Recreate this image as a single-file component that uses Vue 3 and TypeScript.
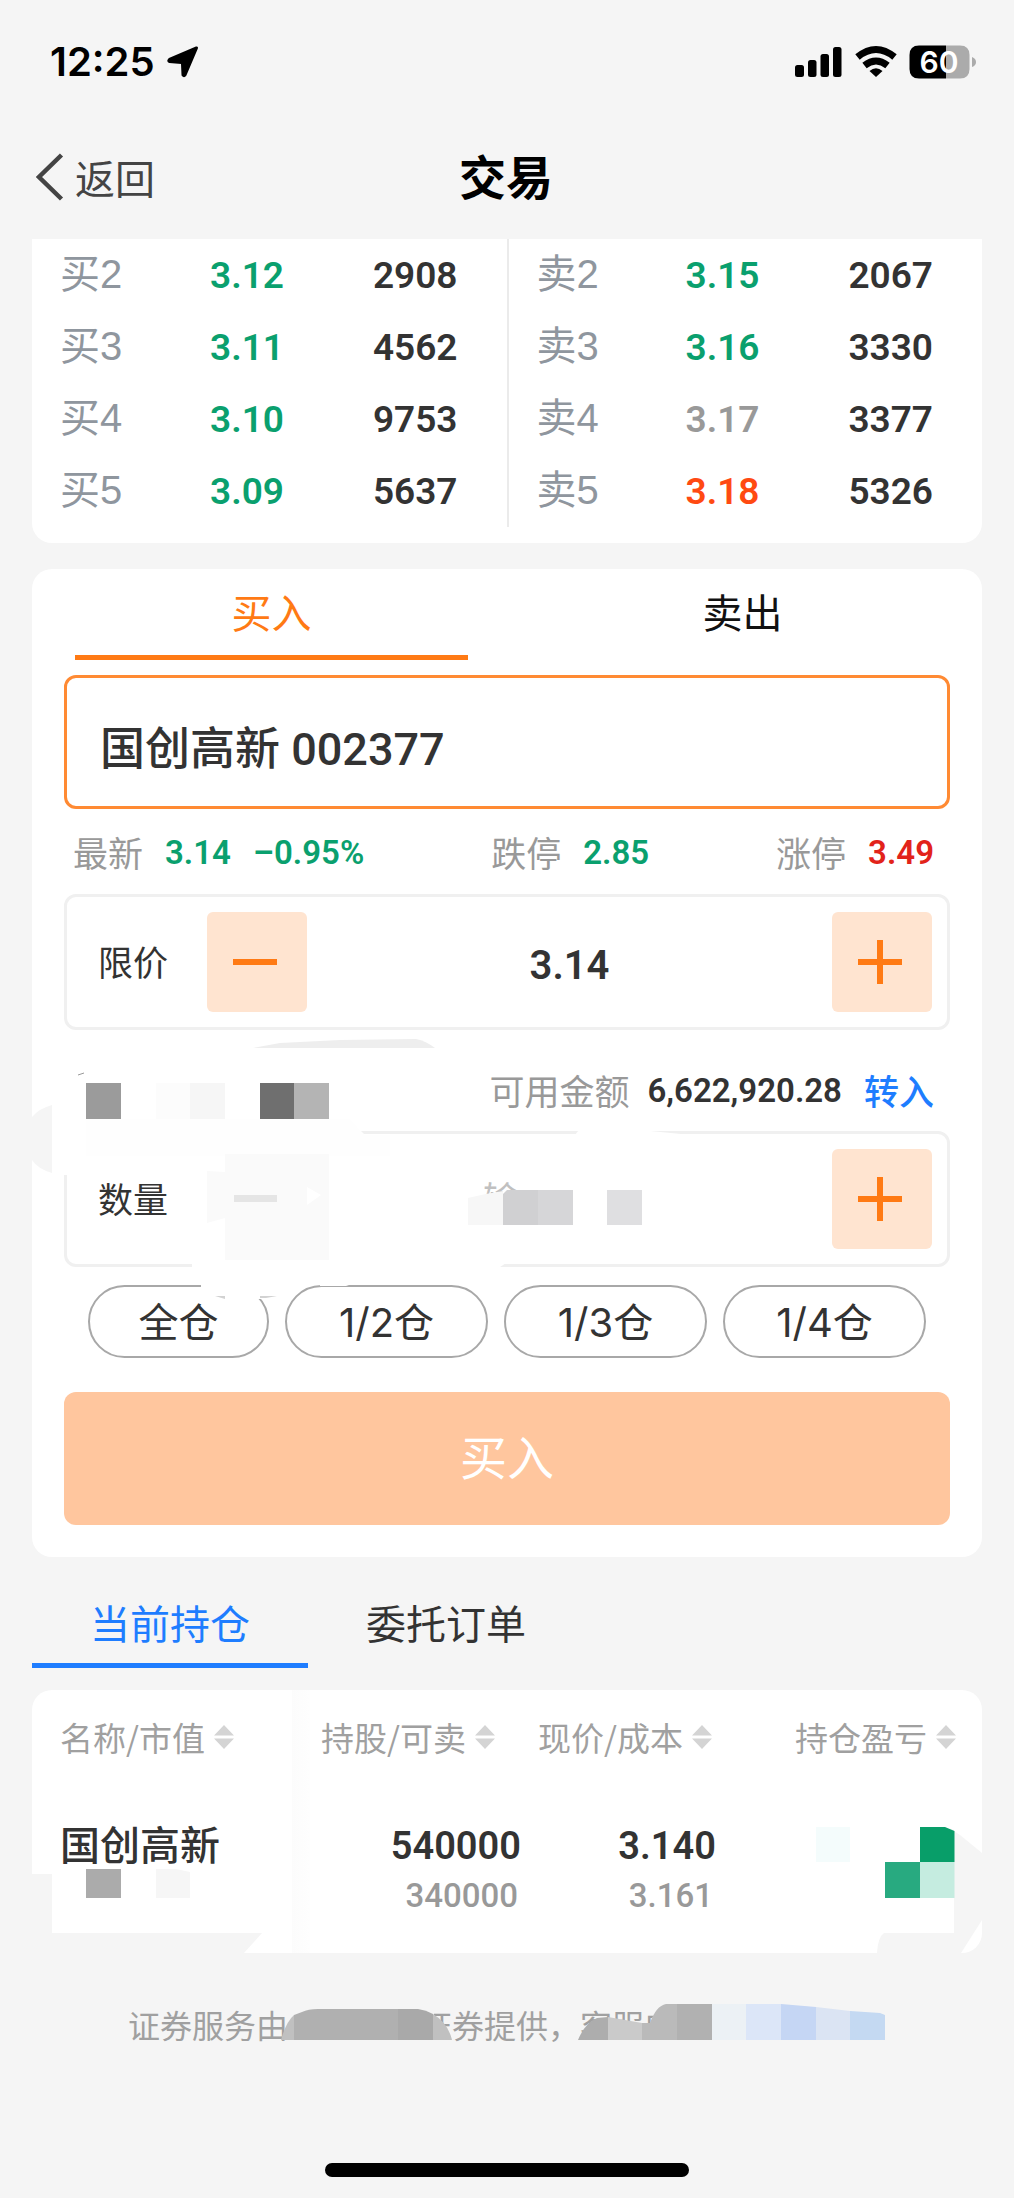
<script setup lang="ts">
import { ref } from 'vue'

type Tone = 'down' | 'up' | 'flat'
interface Quote {
  label: string
  price: string
  volume: string
  tone: Tone
}

const book: { side: string; quotes: Quote[] }[] = [
  {
    side: '买盘',
    quotes: [
      { label: '买2', price: '3.12', volume: '2908', tone: 'down' },
      { label: '买3', price: '3.11', volume: '4562', tone: 'down' },
      { label: '买4', price: '3.10', volume: '9753', tone: 'down' },
      { label: '买5', price: '3.09', volume: '5637', tone: 'down' },
    ],
  },
  {
    side: '卖盘',
    quotes: [
      { label: '卖2', price: '3.15', volume: '2067', tone: 'down' },
      { label: '卖3', price: '3.16', volume: '3330', tone: 'down' },
      { label: '卖4', price: '3.17', volume: '3377', tone: 'flat' },
      { label: '卖5', price: '3.18', volume: '5326', tone: 'up' },
    ],
  },
]

const side = ref<'buy' | 'sell'>('buy')
const listTab = ref<'positions' | 'orders'>('positions')
const stock = ref('国创高新 002377')
const price = ref('3.14')
const quantity = ref('')
const portions = ['全仓', '1/2仓', '1/3仓', '1/4仓']
const columns = ['名称/市值', '持股/可卖', '现价/成本', '持仓盈亏']

function stepPrice(delta: number) {
  price.value = (Number(price.value) + delta).toFixed(2)
}
</script>

<template>
  <div class="page">
    <header>
      <div class="status">
        <div class="clock">
          <span>12:25</span>
          <svg width="32" height="32" viewBox="0 0 32 32" aria-hidden="true">
            <path d="M29.500 2 L2.500 13.500 Q1 15 2.500 15.500 L14.500 16.500 Q15.500 17 15.500 18 L16 29 Q17 30.500 18 29Z" fill="#000" stroke="#000" stroke-width="3" stroke-linejoin="round" />
          </svg>
        </div>
        <svg width="184" height="34" viewBox="794 45 184 34" aria-hidden="true">
          <rect x="795" y="65" width="9" height="12" rx="2.500" />
          <rect x="808" y="60" width="8.500" height="17" rx="2.500" />
          <rect x="820.500" y="54" width="8.500" height="23" rx="2.500" />
          <rect x="833" y="47" width="8.500" height="30" rx="2.500" />
          <g fill="none" stroke="#000">
            <path d="M857.500 57 Q876 42 894.500 57" stroke-width="7" />
            <path d="M864.500 65.500 Q876 56.500 887.500 65.500" stroke-width="7" />
          </g>
          <path d="M869.500 71 Q876 65.500 882.500 71 L876 77 Z" />
          <path d="M919 45.500 H946 V78.500 H919 Q909.500 78.500 909.500 69 V55 Q909.500 45.500 919 45.500Z" />
          <path d="M946 45.500 H960 Q969.500 45.500 969.500 55 V69 Q969.500 78.500 960 78.500 H946Z" fill="#ababab" />
          <path d="M972 57 Q976 58.500 976 62 Q976 65.500 972 67Z" fill="#ababab" />
          <text class="battery-text" x="939" y="73" text-anchor="middle">60</text>
        </svg>
      </div>
      <nav class="nav">
        <button type="button" class="back">
          <svg width="28" height="48" viewBox="0 0 28 48" aria-hidden="true">
            <path d="M25.500 2 L3 24 L25.500 46" fill="none" stroke="#444" stroke-width="4.500" />
          </svg>
          返回
        </button>
        <h1>交易</h1>
      </nav>
    </header>

    <main>
      <section class="card book">
        <table v-for="half in book" :key="half.side" :aria-label="half.side">
          <tbody>
            <tr v-for="q in half.quotes" :key="q.label">
              <th scope="row">{{ q.label }}</th>
              <td :class="q.tone">{{ q.price }}</td>
              <td class="volume">{{ q.volume }}</td>
            </tr>
          </tbody>
        </table>
      </section>

      <section class="card trade">
        <div class="side-tabs">
          <button type="button" :class="{ active: side === 'buy' }" @click="side = 'buy'">买入</button>
          <button type="button" :class="{ active: side === 'sell' }" @click="side = 'sell'">卖出</button>
        </div>

        <input v-model="stock" class="search" type="text" aria-label="股票名称或代码" />

        <div class="limits">
          <div><span>最新</span><b class="down">3.14</b><b class="down">–0.95%</b></div>
          <div><span>跌停</span><b class="down">2.85</b></div>
          <div><span>涨停</span><b class="ceiling">3.49</b></div>
        </div>

        <div class="stepper">
          <label for="price">限价</label>
          <button type="button" class="step" aria-label="减少价格" @click="stepPrice(-0.01)">
            <svg width="44" height="44" viewBox="0 0 44 44"><path d="M0 22H44" /></svg>
          </button>
          <input id="price" v-model="price" type="text" />
          <button type="button" class="step" aria-label="增加价格" @click="stepPrice(0.01)">
            <svg width="44" height="44" viewBox="0 0 44 44"><path d="M0 22H44M22 0V44" /></svg>
          </button>
        </div>

        <div class="amount">
          <div class="funds">
            <span>可用金额</span>
            <b>6,622,920.28</b>
            <a href="#transfer">转入</a>
          </div>
          <div class="stepper">
            <label for="quantity">数量</label>
            <button type="button" class="step" aria-label="减少数量">
              <svg width="44" height="44" viewBox="0 0 44 44"><path d="M0 22H44" /></svg>
            </button>
            <input id="quantity" v-model="quantity" class="quantity" type="text" />
            <button type="button" class="step" aria-label="增加数量">
              <svg width="44" height="44" viewBox="0 0 44 44"><path d="M0 22H44M22 0V44" /></svg>
            </button>
          </div>
          <div class="portions">
            <button v-for="p in portions" :key="p" type="button">{{ p }}</button>
          </div>

          <!-- privacy mosaic over the account figures -->
          <svg class="mosaic" width="660" height="280" viewBox="32 1030 660 280" aria-hidden="true">
            <path d="M253 1048 L280 1043 L340 1040 L416 1039 Q426 1041 435 1048Z" fill="#eee" />
            <path d="M60 1120 H350 L364 1134 H470 V1180 H520 V1228 H560 L500 1267 Q490 1270 480 1270 H192 V1232 H172 V1175 H60Z" fill="#fff" />
            <path d="M579 1130 H640 L681 1134 V1136 H574Z" fill="#fff" />
            <path d="M201 1282 H262 V1299 H225 Q209 1296 201 1287Z" fill="#fff" />
            <path d="M320 1282 H358 L346 1286 H320Z" fill="#fff" />
            <path d="M215 1296 H225 V1299Z M260 1296 H277 L266 1298 H260Z" fill="#d2d2d2" />
            <path d="M78 1075 L84 1073" stroke="#999" />
            <path d="M32 1117 Q40 1108 52 1105 V1173 Q38 1169 32 1160Z" fill="#f5f5f5" />
            <path d="M86 1119 H350 L364 1135 H390 V1156 H86Z" fill="#fefefe" />
            <path d="M86 1083 h35 v36 h-35Z" fill="#9b9b9b" />
            <path d="M156 1083 h34 v36 h-34Z" fill="#fcfcfc" />
            <path d="M190 1083 h35 v36 h-35Z" fill="#f6f6f6" />
            <path d="M260 1083 h34 v36 h-34Z" fill="#6f6f6f" />
            <path d="M294 1083 h35 v36 h-35Z" fill="#b4b4b4" />
            <path d="M207 1171 L225 1172 V1218 L207 1223Z M225 1154 H329 V1260 H225Z" fill="#fafafa" />
            <path d="M234 1195 h43 v7 h-43Z" fill="#e5e5e5" />
            <path d="M307 1187 L321 1195 L307 1205Z" fill="#fff" />
            <text class="hint" x="483" y="1213">输</text>
            <path d="M482 1194 H503 V1190 H521 V1228 H482Z" fill="#fff" />
            <path d="M468 1198 L486 1194 L503 1191 V1225 H468Z" fill="#f7f7f7" />
            <path d="M503 1194 L507 1190 H538 V1225 H503Z" fill="#d0d0d2" />
            <path d="M538 1190 h35 v35 h-35Z" fill="#d6d6d8" />
            <path d="M607 1190 h35 v35 h-35Z" fill="#dfdfe1" />
          </svg>
        </div>

        <button type="button" class="submit">买入</button>
      </section>

      <div class="list-tabs">
        <button type="button" :class="{ active: listTab === 'positions' }" @click="listTab = 'positions'">当前持仓</button>
        <button type="button" :class="{ active: listTab === 'orders' }" @click="listTab = 'orders'">委托订单</button>
      </div>

      <section class="card holdings">
        <table>
          <thead>
            <tr>
              <th v-for="c in columns" :key="c" scope="col">
                <button type="button">
                  {{ c }}
                  <svg width="20" height="24" viewBox="0 0 20 24" aria-hidden="true">
                    <path d="M10 0 L20 10.500 H0Z M0 13.500 H20 L10 24Z" fill="#d4d4d4" />
                  </svg>
                </button>
              </th>
            </tr>
          </thead>
          <tbody>
            <tr>
              <td><strong>国创高新</strong></td>
              <td><b>540000</b><span>340000</span></td>
              <td><b>3.140</b><span>3.161</span></td>
              <td></td>
            </tr>
          </tbody>
        </table>

        <!-- privacy mosaic: market value on the left, profit and loss on the right -->
        <svg class="mosaic left" width="240" height="80" viewBox="32 1873 240 80" aria-hidden="true">
          <path d="M32 1874 H52 V1933 H262 L244 1953 H32Z" fill="#f5f5f5" />
          <path d="M86 1869 h35 v29 h-35Z" fill="#ababab" />
          <path d="M156 1869 h20 l14 3 v26 h-34Z" fill="#f6f6f6" />
        </svg>
        <svg class="mosaic right" width="182" height="133" viewBox="800 1820 182 133" aria-hidden="true">
          <path d="M949 1828 L960 1835 L982 1853 V1920 L961 1953 H877 Q878 1937 884 1933 H954 V1830Z" fill="#f5f5f5" />
          <path d="M816 1827 h34 v35 h-34Z" fill="#f4fcfc" />
          <path d="M920 1827 h25 l9.500 4 v31 h-34.500Z" fill="#089e69" />
          <path d="M885 1862 h35 v36 h-35Z" fill="#28aa80" />
          <path d="M920 1862 h34.500 v36 h-34.500Z" fill="#c5ece0" />
        </svg>
      </section>
    </main>

    <footer>
      <p>
        <span>证券服务由</span><span>证券提供，客服电</span>
        <svg class="mosaic" width="758" height="48" viewBox="128 2001 758 48" aria-hidden="true">
          <path d="M419 2004 H434 V2045 H419Z M580 2041 L592 2022 H610 L650 2024 L658 2004 H690 V2045 H580Z" fill="#f5f5f5" />
          <path d="M281 2040 Q286 2022 294 2015 V2040Z" fill="#c0c0c0" />
          <path d="M294 2015 L302 2012 Q308 2009 318 2009 H398 V2040 H294Z" fill="#b0b0b0" />
          <path d="M398 2009 H418 Q426 2010 433 2014 V2040 H398Z" fill="#a9a9a9" />
          <path d="M433 2014 Q448 2023 452 2040 H433Z" fill="#c0c0c0" />
          <path d="M578 2040 Q585 2023 597 2018 L608 2017 V2040Z" fill="#adadad" />
          <path d="M608 2017 L642 2023 V2040 H608Z" fill="#cacaca" />
          <path d="M642 2023 H650 Q656 2006 666 2004 H677 V2040 H642Z" fill="#bababa" />
          <path d="M677 2004 h35 v36 h-35Z" fill="#b1b1b1" />
          <path d="M712 2004 h34 v36 h-34Z" fill="#ecf1f5" />
          <path d="M746 2004 h35 v36 h-35Z" fill="#dce6f8" />
          <path d="M781 2004 L816 2007 V2040 H781Z" fill="#c5d6f4" />
          <path d="M816 2007 L850 2011 V2040 H816Z" fill="#dbe4f3" />
          <path d="M850 2011 L880 2013 L885 2015 V2040 H850Z" fill="#c4d9f2" />
        </svg>
      </p>
      <div class="home-bar"></div>
    </footer>
  </div>
</template>

<style>
body {
  background: #f5f5f5;
}
</style>

<style scoped>
.page {
  min-height: 100vh;
  box-sizing: border-box;
  background: #f5f5f5;
  color: #333;
  font-family: 'Liberation Sans', 'Noto Sans CJK SC', sans-serif;
  font-size: 40px;
}
.page * {
  box-sizing: border-box;
}
button,
input {
  margin: 0;
  padding: 0;
  border: 0;
  background: none;
  color: inherit;
  font: inherit;
}
input {
  outline: none;
  min-width: 0;
}
table {
  border-collapse: collapse;
  table-layout: fixed;
}
th,
td {
  padding: 0;
  font-weight: 400;
  text-align: left;
}
.mosaic {
  position: absolute;
  pointer-events: none;
}

/* status bar and title */
.status {
  display: flex;
  justify-content: space-between;
  align-items: center;
  height: 124px;
  padding: 0 36px 0 50px;
}
.clock {
  display: flex;
  align-items: center;
  gap: 12px;
  color: #000;
  font: 600 40px/48px Inter, sans-serif;
}
.battery-text {
  fill: #fff;
  font: 600 30px Inter, sans-serif;
}
.nav {
  display: grid;
  grid-template-columns: 1fr auto 1fr;
  align-items: center;
  height: 110px;
  padding: 0 38px 0 36px;
}
.nav h1 {
  margin: 0;
  color: #000;
  font-size: 47px;
  line-height: 64px;
  font-weight: 700;
}
.back {
  display: flex;
  align-items: center;
  gap: 11px;
  padding-bottom: 4px;
  color: #444;
}

main {
  padding: 5px 32px 0;
}
.card {
  position: relative;
  border-radius: 20px;
  background: #fff;
}

/* order book */
.book {
  display: flex;
  padding-bottom: 16px;
  border-radius: 0 0 20px 20px;
}
.book table {
  flex: 1;
}
.book table + table {
  border-left: 2px solid #ebebeb;
}
.book tr {
  height: 72px;
}
.book th {
  width: 178px;
  padding: 0 0 2px 28px;
  color: #8f969e;
  font-size: 40px;
  line-height: 48px;
}
.book td {
  padding-top: 2px;
  font: 600 37px/48px Roboto, sans-serif;
}
.book .volume {
  padding-right: 49px;
  text-align: right;
}
.down {
  color: #0aa06e;
}
.up {
  color: #ff4a12;
}
.flat {
  color: #999;
}
.ceiling {
  color: #e2231a;
}

/* order form */
.trade {
  margin-top: 26px;
  padding-bottom: 32px;
}
.side-tabs {
  display: flex;
  gap: 78px;
  padding: 0 43px;
}
.side-tabs button {
  flex: 1;
  height: 91px;
  padding-bottom: 2px;
  border-bottom: 5px solid transparent;
  color: #111;
}
.side-tabs .active {
  border-color: #ff7a14;
  color: #ff7a14;
}
.search {
  display: block;
  width: calc(100% - 64px);
  height: 134px;
  margin: 15px 32px 0;
  padding: 6px 32px 0 33px;
  border: 3px solid #ff8a33;
  border-radius: 12px;
  font: 500 45px/64px Roboto, 'Noto Sans CJK SC', sans-serif;
}
.limits {
  display: flex;
  justify-content: space-between;
  align-items: center;
  height: 85px;
  padding: 0 48px 0 41px;
  color: #999;
  font-size: 35px;
}
.limits div {
  display: flex;
  align-items: center;
  gap: 22px;
}
.limits b,
.funds b {
  padding-top: 2px;
  font: 600 33px/48px Roboto, sans-serif;
}
.stepper {
  display: flex;
  align-items: center;
  height: 136px;
  margin: 0 32px;
  padding: 0 15px 0 31px;
  border: 3px solid #f0f0f0;
  border-radius: 12px;
}
.stepper label {
  width: 109px;
  padding-bottom: 4px;
  font-size: 35px;
}
.stepper input {
  flex: 1;
  height: 100px;
  padding-top: 6px;
  text-align: center;
  font: 600 40px/48px Roboto, 'Noto Sans CJK SC', sans-serif;
}
.step {
  display: grid;
  place-items: center;
  width: 100px;
  height: 100px;
  padding-right: 4px;
  border-radius: 6px;
  background: #ffe4d0;
}
.step path {
  stroke: #ff7a14;
  stroke-width: 6;
}
.amount {
  position: relative;
}
.amount > .mosaic {
  top: 0;
  left: 0;
}
.funds {
  display: flex;
  justify-content: flex-end;
  align-items: center;
  height: 101px;
  padding: 18px 48px 0 0;
  font-size: 35px;
}
.funds span {
  color: #999;
}
.funds b {
  margin: 0 22px 0 18px;
}
.funds a {
  color: #1e7dff;
  font-weight: 500;
  text-decoration: none;
}
.hint {
  fill: #c0c0c0;
  font: 400 36px 'Noto Sans CJK SC', sans-serif;
}
.portions {
  display: grid;
  grid-template-columns: 181fr 203fr 203fr 203fr;
  gap: 16px;
  margin-top: 18px;
  padding: 0 56px;
}
.portions button {
  height: 73px;
  padding-bottom: 4px;
  border: 2px solid #a8a8a8;
  border-radius: 37px;
  font-family: Inter, 'Noto Sans CJK SC', sans-serif;
}
.submit {
  display: block;
  width: calc(100% - 64px);
  height: 133px;
  margin: 34px 32px 0;
  padding-bottom: 8px;
  border-radius: 12px;
  background: #ffc69e;
  color: #fff;
  font-size: 47px;
}

/* positions */
.list-tabs {
  display: flex;
  margin-bottom: 22px;
}
.list-tabs button {
  width: 276px;
  height: 111px;
  padding-top: 24px;
  border-bottom: 5px solid transparent;
}
.list-tabs .active {
  border-color: #1e7dff;
  color: #1e7dff;
}
.holdings table {
  width: 100%;
}
.holdings th {
  height: 95px;
  padding-bottom: 2px;
  color: #a0a0a0;
}
.holdings th:nth-child(1) {
  width: 278px;
}
.holdings th:nth-child(2) {
  width: 211px;
  padding-left: 11px;
}
.holdings th:nth-child(3) {
  width: 195px;
  padding-left: 17px;
}
.holdings th:nth-child(4) {
  padding-right: 26px;
}
.holdings th:first-child,
.holdings td:first-child {
  padding-left: 28px;
  background: linear-gradient(90deg, #fcfcfc, #fefefe) right / 18px 100% no-repeat;
}
.holdings th button {
  display: flex;
  align-items: center;
  gap: 9px;
  white-space: nowrap;
  font: 400 33px/48px 'Noto Sans CJK SC', sans-serif;
}
.holdings th:last-child button {
  margin-left: auto;
}
.holdings td {
  height: 168px;
  padding-top: 36px;
  vertical-align: top;
  text-align: right;
}
.holdings td:first-child {
  border-radius: 0 0 0 20px;
  text-align: left;
}
.holdings strong {
  display: block;
  font-weight: 500;
  line-height: 50px;
}
.holdings b,
.holdings span {
  display: block;
  font: 600 38px/50px Roboto, sans-serif;
}
.holdings span {
  padding-right: 3px;
  color: #999;
  font-size: 33px;
  font-weight: 500;
}
.holdings .left {
  bottom: 0;
  left: 0;
  overflow: visible;
}
.holdings .right {
  right: 0;
  bottom: 0;
}

footer {
  padding: 48px 0 21px;
}
footer p {
  position: relative;
  display: flex;
  gap: 132px;
  width: 758px;
  height: 48px;
  margin: 0 auto 114px;
  color: #a0a0a0;
  font: 400 32px/46px 'Noto Sans CJK SC', sans-serif;
  white-space: nowrap;
}
footer .mosaic {
  top: 0;
  left: 0;
}
.home-bar {
  width: 364px;
  height: 14px;
  margin: 0 auto;
  border-radius: 7px;
  background: #000;
}
</style>
